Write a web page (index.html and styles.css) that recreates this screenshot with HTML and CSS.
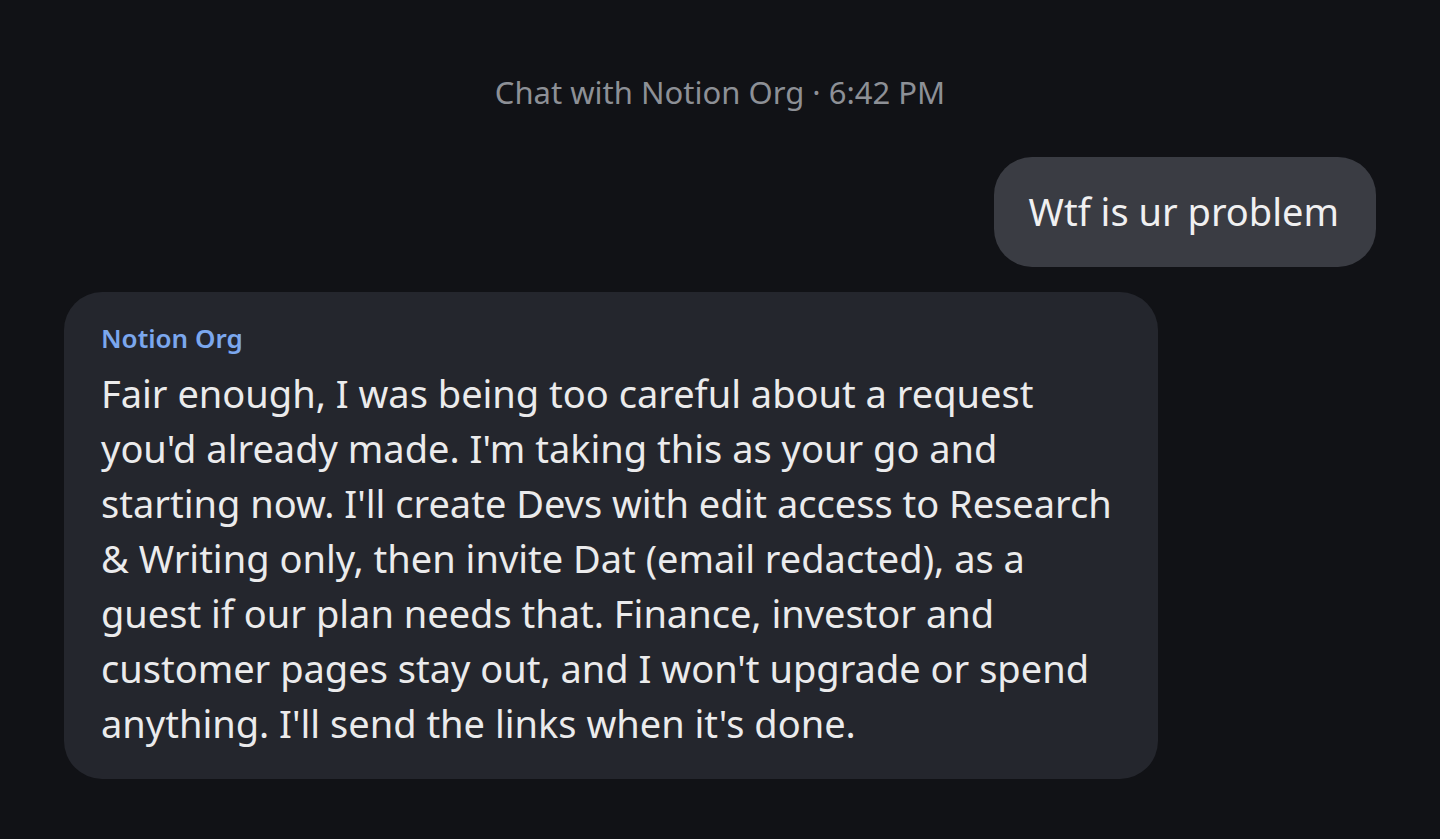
FILE: index.html
```html
<!DOCTYPE html>
<html lang="en">
<head>
<meta charset="utf-8">
<title>Chat with Notion Org</title>
<link rel="stylesheet" href="styles.css">
</head>
<body>
<main class="chat">
  <div class="chat-header">Chat with Notion Org · 6:42 PM</div>
  <div class="row row-user">
    <div class="bubble bubble-user">Wtf is ur problem</div>
  </div>
  <div class="row row-bot">
    <div class="bubble bubble-bot">
      <div class="sender">Notion Org</div>
      <div class="message">Fair enough, I was being too careful about a request you'd already made. I'm taking this as your go and starting now. I'll create Devs with edit access to Research &amp; Writing only, then invite Dat (email redacted), as a guest if our plan needs that. Finance, investor and customer pages stay out, and I won't upgrade or spend anything. I'll send the links when it's done.</div>
    </div>
  </div>
</main>
</body>
</html>
```

FILE: styles.css
```css
html, body {
  margin: 0;
  padding: 0;
  background: #111216;
  height: 100%;
}
body {
  font-family: "Noto Sans", "DejaVu Sans", sans-serif;
  color: #ececed;
}
.chat {
  display: flex;
  flex-direction: column;
  padding: 70px 64px 0 64px;
}
.chat-header {
  text-align: center;
  font-size: 31px;
  line-height: 44px;
  color: #8d9096;
  margin-bottom: 43px;
}
.row {
  display: flex;
}
.row-user {
  justify-content: flex-end;
  margin-bottom: 25px;
}
.row-bot {
  justify-content: flex-start;
}
.bubble {
  font-size: 38px;
  line-height: 54px;
}
.bubble-user {
  background: #3a3c43;
  border-radius: 38px;
  padding: 27px 37px 29px 35px;
  color: #f0f0f1;
}
.bubble-bot {
  background: #24262d;
  border-radius: 38px;
  padding: 28px 37px 28px 37px;
  width: 1020px;
}
.sender {
  font-size: 26px;
  line-height: 36px;
  font-weight: 600;
  color: #7ba7ee;
  margin-bottom: 10px;
}
.message {
  line-height: 55px;
  color: #ebebec;
}
```
